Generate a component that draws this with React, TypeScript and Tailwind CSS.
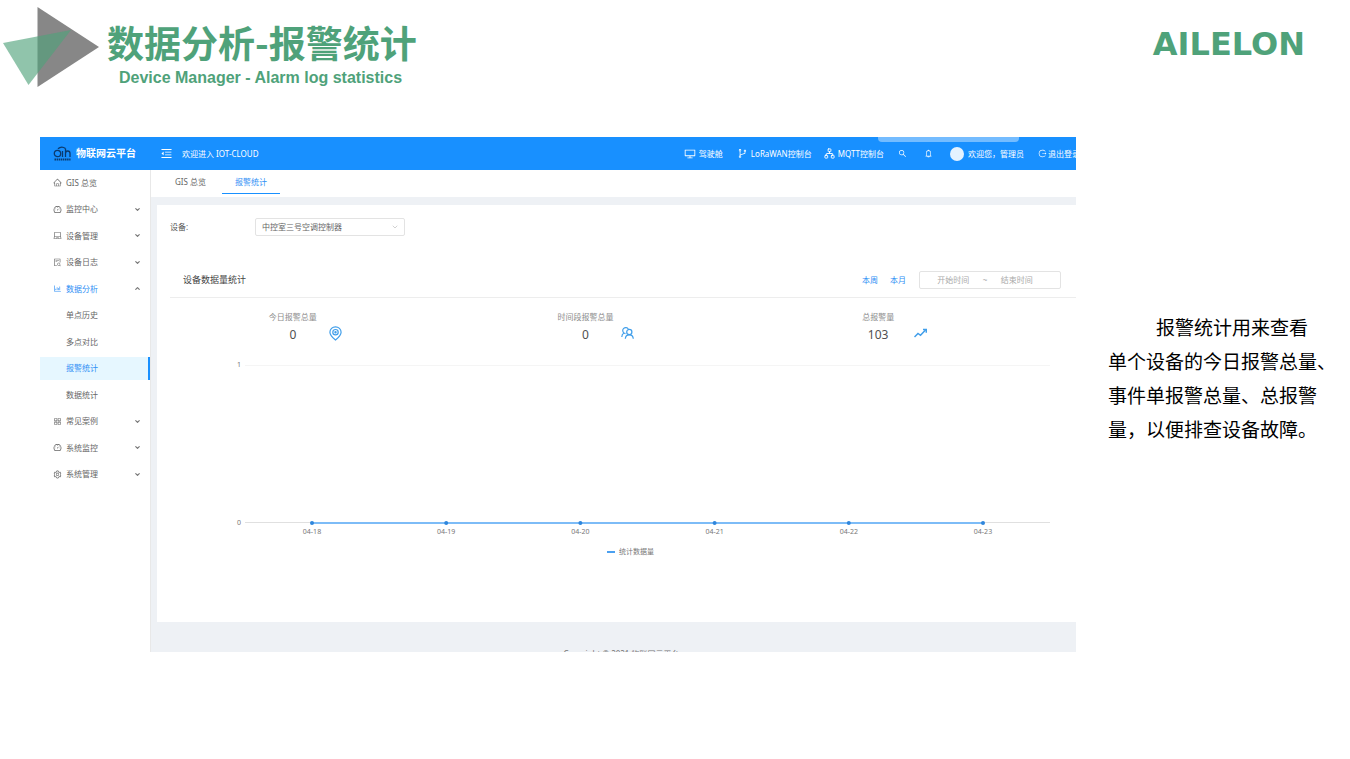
import { useState, type ReactNode } from 'react';
import type { IconType } from 'react-icons';
import {
    AiOutlineHome, AiOutlineDashboard, AiOutlineLaptop, AiOutlineFileSearch, AiOutlineBarChart, AiOutlineAppstore,
    AiOutlineSetting, AiOutlineMenuFold, AiOutlineDesktop, AiOutlineBranches, AiOutlineSearch,
    AiOutlineBell, AiOutlineLogout,
} from 'react-icons/ai';
import { ChevronDown, ChevronUp, Network } from 'lucide-react';

interface MenuEntry {
    label: string;
    icon?: IconType;
    arrow?: 'up' | 'down';
}

const menu: MenuEntry[] = [
    { label: 'GIS 总览', icon: AiOutlineHome },
    { label: '监控中心', icon: AiOutlineDashboard, arrow: 'down' },
    { label: '设备管理', icon: AiOutlineLaptop, arrow: 'down' },
    { label: '设备日志', icon: AiOutlineFileSearch, arrow: 'down' },
    { label: '数据分析', icon: AiOutlineBarChart, arrow: 'up' },
    { label: '单点历史' },
    { label: '多点对比' },
    { label: '报警统计' },
    { label: '数据统计' },
    { label: '常见案例', icon: AiOutlineAppstore, arrow: 'down' },
    { label: '系统监控', icon: AiOutlineDashboard, arrow: 'down' },
    { label: '系统管理', icon: AiOutlineSetting, arrow: 'down' },
];

const days = ['04-18', '04-19', '04-20', '04-21', '04-22', '04-23'];

const SlideLogo = () => (
    <svg width="96" height="80" viewBox="0 0 96 80" aria-hidden="true">
        <path d="M34.500 0L96 40L34.500 80Z" fill="#878787" />
        <path d="M0 36L68 23L25.500 78Z" fill="#4fa27a" fillOpacity="0.63" />
    </svg>
);

const CloudLogo = () => (
    <svg width="19" height="16" viewBox="0 0 19 16" fill="none" stroke="#0b3a6e" strokeWidth="1.300" aria-hidden="true">
        <circle cx="4.500" cy="7.500" r="3.200" />
        <path d="M9.500 5v6M12.500 2.500v8.500M12.500 7.500q0-2.500 2.200-2.500q2.300 0 2.300 2.500v3.500" />
        <path d="M5 2.800Q8.500-.5 12.500 2.500" />
        <path d="M1.500 13.500h16" strokeWidth="2" strokeDasharray="1.500 .6" />
    </svg>
);

const PinIcon = () => (
    <svg width="13" height="15" viewBox="0 0 13 15" fill="none" stroke="#409eea" strokeWidth="1.200" aria-hidden="true">
        <path d="M6.500 14C3.500 11.600.9 9.200.9 6.200a5.600 5.400 0 0 1 11.200 0c0 3-2.600 5.400-5.600 7.800Z" />
        <circle cx="6.500" cy="6.200" r="2.700" />
        <circle cx="6.500" cy="6.200" r=".6" />
    </svg>
);

const UsersIcon = () => (
    <svg width="13" height="14" viewBox="0 0 13 14" fill="none" stroke="#409eea" strokeWidth="1.200" aria-hidden="true">
        <path d="M3 7A3 3 0 1 1 7.300 3M3 7Q.8 8 .8 11M3 7l1.500.6" />
        <circle cx="8.300" cy="6" r="2.600" />
        <path d="M4.300 12.800q.3-3.900 4-3.900t4 3.900" />
    </svg>
);

const TrendIcon = () => (
    <svg width="13" height="14" viewBox="0 0 13 14" fill="none" stroke="#409eea" strokeWidth="1.500" aria-hidden="true">
        <path d="M.5 11L4 7.500l2.500 1.800L11.500 4" />
        <path d="M9 3.500h3.300v3.200" />
    </svg>
);

interface StatProps {
    label: string;
    value: number;
    children: ReactNode;
}

const Stat = ({ label, value, children }: StatProps) => (
    <div className="flex items-end justify-center gap-2">
        <div className="w-14 text-center whitespace-nowrap">
            <p className="text-[8px] leading-3 text-[#8c8c8c]">{label}</p>
            <p className="mt-1 text-[12px] leading-4 text-[#505050]">{value}</p>
        </div>
        <div className="flex h-[17px] w-[13px] justify-center">{children}</div>
    </div>
);

const AlarmChart = () => (
    <svg viewBox="0 0 919 206" className="block w-full" fontSize="7" fill="#777">
        <text x="84" y="12" textAnchor="end">1</text>
        <text x="84" y="170" textAnchor="end">0</text>
        <path d="M88 10.500H893" stroke="#f5f5f5" />
        <path d="M88 167.500H893" stroke="#e0e0e0" />
        <path d="M155 168H826" stroke="#7dbcf7" strokeWidth="2" />
        {days.map((day, idx) => (
            <g key={day}>
                <circle cx={155 + idx * 134.2} cy="168" r="2" fill="#2f86dc" />
                <text x={155 + idx * 134.2} y="179" textAnchor="middle">{day}</text>
            </g>
        ))}
        <path d="M450 197h8" stroke="#4ba0f0" strokeWidth="2" />
        <text x="462" y="199">统计数据量</text>
    </svg>
);

const TopBar = () => (
    <header className="relative flex h-[33px] shrink-0 items-center overflow-hidden whitespace-nowrap bg-[#1890ff] text-[8px] text-white">
        <div className="absolute right-[57px] top-0 h-[5px] w-[141px] rounded-b-sm bg-white/40" />
        <div className="flex w-[110px] shrink-0 items-center gap-1 pl-[13px] text-[10px] font-bold">
            <CloudLogo />
            物联网云平台
        </div>
        <button aria-label="收起菜单" className="ml-2.5"><AiOutlineMenuFold size={13} /></button>
        <span className="ml-[9px]">欢迎进入 IOT-CLOUD</span>
        <nav className="-mr-1 ml-auto flex shrink-0 items-center">
            <a href="#cockpit" className="flex items-center gap-[3px]"><AiOutlineDesktop size={12} />驾驶舱</a>
            <a href="#lorawan" className="ml-3.5 flex items-center gap-[3px]"><AiOutlineBranches size={11} />LoRaWAN控制台</a>
            <a href="#mqtt" className="ml-3 flex items-center gap-[3px]"><Network size={11} />MQTT控制台</a>
            <button aria-label="搜索" className="ml-3.5"><AiOutlineSearch size={9} /></button>
            <button aria-label="通知" className="ml-[17px]"><AiOutlineBell size={9} /></button>
            <a href="#user" className="ml-[17px] flex items-center gap-1">
                <span className="size-3.5 rounded-full bg-[#e4f2ff]" />
                欢迎您，管理员
            </a>
            <a href="#logout" className="ml-3.5 flex items-center gap-px"><AiOutlineLogout size={9} />退出登录</a>
        </nav>
    </header>
);

const SideMenu = () => {
    const [selected, setSelected] = useState('报警统计');

    return (
        <nav className="flex h-[316px] w-[110px] shrink-0 flex-col justify-between pt-px text-[8px]">
            {menu.map(({ label, icon: Icon, arrow }) => {
                const active = label === selected;
                const open = arrow === 'up';
                return (
                    <button
                        key={label}
                        onClick={() => setSelected(label)}
                        className={`flex h-[23px] items-center border-r-2 pl-[13px] pr-[7px] ${active ? 'border-[#1890ff] bg-[#e6f7ff]' : 'border-transparent'} ${active || open ? 'text-[#2f8ff5]' : 'text-[#666]'}`}
                    >
                        <span className="mr-1 w-[9px]">{Icon && <Icon size={9} />}</span>
                        {label}
                        <span className="ml-auto text-[#777]">
                            {arrow === 'down' && <ChevronDown size={7} strokeWidth={4} />}
                            {open && <ChevronUp size={7} strokeWidth={4} />}
                        </span>
                    </button>
                );
            })}
        </nav>
    );
};

const StatsPanel = () => (
    <section className="ml-1.5 mt-2 h-[417px] bg-white">
        <div className="flex items-center pl-[13px] pt-[13px] text-[8px] text-[#555]">
            <label htmlFor="device" className="w-[85px]">设备:</label>
            <div className="relative">
                <select id="device" className="h-[18px] w-[150px] appearance-none rounded-xs border border-[#e3e3e3] bg-white pl-1.5 text-[8px] text-[#666]">
                    <option>中控室三号空调控制器</option>
                </select>
                <ChevronDown size={8} className="pointer-events-none absolute right-1.5 top-[5px] text-[#bbb]" />
            </div>
        </div>
        <div className="ml-[13px] mt-[27px] flex h-[35px] items-center border-b border-[#ededed] pl-[13px] text-[8px]">
            <h2 className="text-[9px] text-[#444]">设备数据量统计</h2>
            <button className="ml-auto text-[#2f8ff5]">本周</button>
            <button className="ml-3 text-[#2f8ff5]">本月</button>
            <div className="ml-[13px] mr-[15px] flex h-[18px] w-[142px] items-center rounded-xs border border-[#e3e3e3] pl-1 pr-3.5 text-[#aaa]">
                <input aria-label="开始时间" placeholder="开始时间" className="w-0 flex-1 text-center placeholder:text-[#aaa]" />
                <span>~</span>
                <input aria-label="结束时间" placeholder="结束时间" className="w-0 flex-1 text-center placeholder:text-[#aaa]" />
            </div>
        </div>
        <div className="mr-[41px] grid grid-cols-3 pb-3 pt-[13px]">
            <Stat label="今日报警总量" value={0}><PinIcon /></Stat>
            <Stat label="时间段报警总量" value={0}><UsersIcon /></Stat>
            <Stat label="总报警量" value={103}><TrendIcon /></Stat>
        </div>
        <AlarmChart />
    </section>
);

export default function App() {
    return (
        <div className="bg-white font-['Noto_Sans','Noto_Sans_CJK_SC',sans-serif]">
            <div className="flex h-[137px] items-start pl-[3px] pr-[45px] pt-[7px] text-[#4fa27a]">
                <SlideLogo />
                <div className="ml-2 mt-[13px]">
                    <h1 className="font-['Noto_Sans_CJK_SC',sans-serif] text-[37px] font-bold leading-[44px]">数据分析-报警统计</h1>
                    <p className="ml-3 mt-0.5 font-['Liberation_Sans',sans-serif] text-[16px] font-bold leading-6">Device Manager - Alarm log statistics</p>
                </div>
                <p className="ml-auto mt-[17px] font-['DejaVu_Sans',sans-serif] text-[32px] font-bold leading-10">AILELON</p>
            </div>
            <main className="flex">
                <div className="ml-10 flex h-[515px] min-w-0 flex-1 flex-col overflow-hidden">
                    <TopBar />
                    <div className="flex min-h-0 flex-1">
                        <SideMenu />
                        <div className="min-w-0 flex-1 border-l border-[#e8e8e8] bg-[#eef1f5]">
                            <div className="flex h-[27px] bg-white pl-[11px] text-[8px]">
                                <button className="h-6 px-[13px] text-[#666]">GIS 总览</button>
                                <button className="ml-[3px] h-6 border-b border-[#1890ff] px-[13px] text-[#2f8ff5]">报警统计</button>
                            </div>
                            <StatsPanel />
                            <footer className="mt-[26px] pl-4 text-center text-[8px] leading-3 text-[#777]">Copyright © 2021 物联网云平台</footer>
                        </div>
                    </div>
                </div>
                <p className="w-[274px] shrink-0 whitespace-nowrap pl-8 pt-[173px] indent-12 font-['Noto_Sans_CJK_SC',sans-serif] text-[19px] leading-[34px] text-black">
                    报警统计用来查看<br />
                    单个设备的今日报警总量、<br />
                    事件单报警总量、总报警<br />
                    量，以便排查设备故障。
                </p>
            </main>
        </div>
    );
}
